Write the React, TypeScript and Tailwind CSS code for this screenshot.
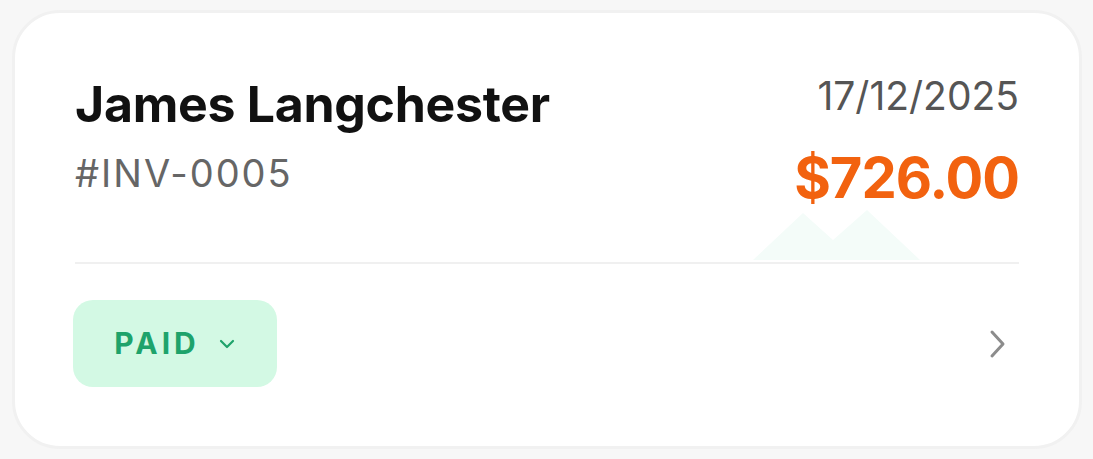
import React from "react";

export default function App() {
  return (
    <div className="w-[1093px] h-[459px] bg-[#f7f7f7] p-[10px_11px_10px_12px]" style={{ fontFamily: "Inter, 'Noto Sans', sans-serif" }}>
      <div className="relative h-full w-full rounded-[48px] border-[3px] border-[#f1f1f1] bg-white px-[60px] pt-[60px]">
        <svg className="absolute left-[738px] top-[195px]" width="170" height="52" viewBox="0 0 170 52">
          <path d="M0 52 L50 5 L80 32 L114 2 L167 52 Z" fill="#f4fcf9" />
        </svg>
        <div className="relative flex justify-between">
          <div className="flex flex-col">
            <div className="mt-[3px] text-[50px] font-bold leading-[56px] tracking-[-0.3px] text-[#111111]">James Langchester</div>
            <div className="mt-[18px] text-[38px] leading-[46px] tracking-[2px] text-[#666666]">#INV-0005</div>
          </div>
          <div className="flex flex-col items-end">
            <div className="text-[39px] leading-[46px] text-[#555555]">17/12/2025</div>
            <div className="mt-[27px] text-[56px] font-bold leading-[64px] tracking-[-1px] text-[#f2620f]">$726.00</div>
          </div>
        </div>
        <div className="relative mt-[52px] h-[2px] bg-[#f0f0f0]" />
        <div className="mt-[36px] flex items-center justify-between">
          <div className="ml-[-2px] flex h-[87px] w-[204px] items-center justify-center gap-[18px] rounded-[20px] bg-[#d3f9e4]">
            <span className="text-[30px] font-bold tracking-[4px] text-[#1ea36b]">PAID</span>
            <svg width="18" height="10" viewBox="0 0 18 10" fill="none" stroke="#1ea36b" strokeWidth="2.2" strokeLinecap="round" strokeLinejoin="round"><path d="M3 2 L9 8 L15 2" /></svg>
          </div>
          <svg className="mr-[10px]" width="22" height="30" viewBox="0 0 22 30" fill="none" stroke="#8c8c8c" strokeWidth="3" strokeLinecap="round" strokeLinejoin="round"><path d="M5 3 L16 15 L5 27" /></svg>
        </div>
      </div>
    </div>
  );
}
